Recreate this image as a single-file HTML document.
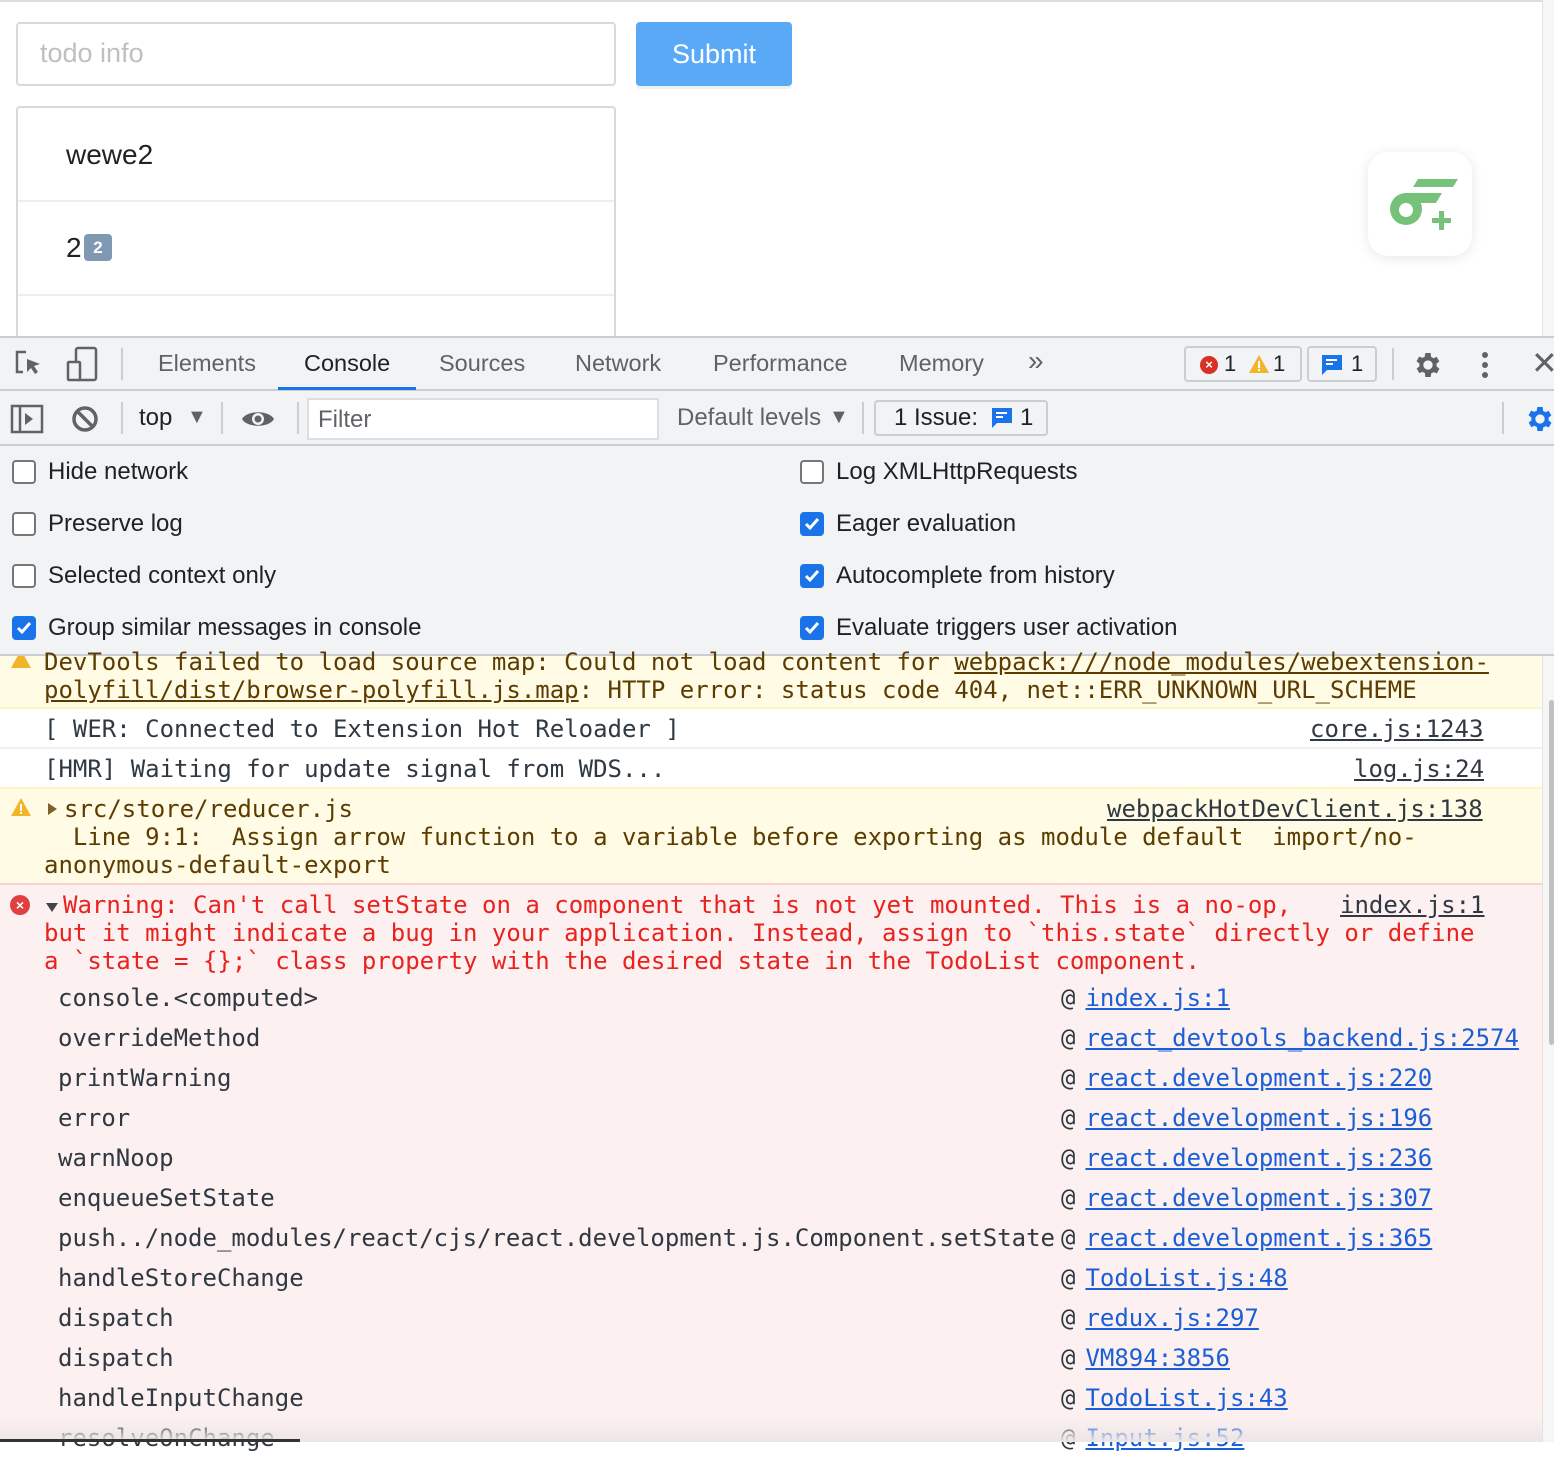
<!DOCTYPE html>
<html><head><meta charset="utf-8"><style>
*{box-sizing:border-box;margin:0;padding:0}
body{width:1554px;height:1442px;overflow:hidden;background:#fff;font-family:"Liberation Sans",Arial,sans-serif;position:relative}
.a{position:absolute}
.mono{font-family:"DejaVu Sans Mono","Liberation Mono",monospace;font-size:24px;white-space:pre}
.tab{position:absolute;top:350px;font-size:23.5px;color:#5f6368}
.cb{position:absolute;width:24px;height:24px;border:2px solid #767676;border-radius:4px;background:#fff}
.cb.on{background:#1a73e8;border-color:#1a73e8}
.cbl{position:absolute;font-size:24px;color:#202124}
a{color:#1a5fd6;text-decoration:underline}
.lnk{color:#555;text-decoration:underline}
</style></head><body>
<!-- page -->
<div class="a" style="left:0;top:0;width:1554px;height:2px;background:#dadce0"></div>
<div class="a" style="left:1542px;top:0;width:12px;height:336px;background:#f6f6f6;border-left:1px solid #e3e3e3"></div>
<div class="a" style="left:16px;top:22px;width:600px;height:64px;border:2px solid #d9d9d9;border-radius:4px"></div>
<div class="a" style="left:40px;top:38px;font-size:27px;color:#bfbfbf">todo info</div>
<div class="a" style="left:636px;top:22px;width:156px;height:64px;background:#5aa9f7;border-radius:4px;box-shadow:0 3px 0 #eef0f2;color:#fff;font-size:27px;text-align:center;line-height:64px">Submit</div>
<div class="a" style="left:16px;top:106px;width:600px;height:240px;border:2px solid #d9d9d9;border-radius:4px"></div>
<div class="a" style="left:18px;top:200px;width:596px;height:2px;background:#eee"></div>
<div class="a" style="left:18px;top:294px;width:596px;height:2px;background:#eee"></div>
<div class="a" style="left:66px;top:139px;font-size:28px;color:#222">wewe2</div>
<div class="a" style="left:66px;top:232px;font-size:28px;color:#222">2</div>
<div class="a" style="left:84px;top:234px;width:28px;height:27px;background:#7f99b3;border-radius:4px;color:#fff;font-size:17px;font-weight:bold;text-align:center;line-height:27px">2</div>
<div class="a" style="left:1368px;top:152px;width:104px;height:104px;background:#fff;border-radius:20px;box-shadow:0 2px 12px rgba(0,0,0,.1)"></div>
<svg class="a" style="left:1368px;top:152px" width="104" height="104" viewBox="0 0 104 104">
<polygon points="50,27 90,27 85,35 45,35" fill="#76c27a"/>
<circle cx="38" cy="57" r="16" fill="#76c27a"/>
<polygon points="38,41 74,41 68,51 38,51" fill="#76c27a"/>
<circle cx="38" cy="58" r="7" fill="#fff"/>
<rect x="64" y="66" width="19" height="5" fill="#76c27a"/><rect x="71" y="59" width="5" height="19" fill="#76c27a"/>
</svg>
<!-- devtools toolbar 1 -->
<div class="a" style="left:0;top:336px;width:1554px;height:110px;background:#f1f3f4;border-top:2px solid #cacdd1"></div>
<div class="a" style="left:0;top:389px;width:1554px;height:2px;background:#cacdd1"></div>
<div class="a" style="left:0;top:444px;width:1554px;height:2px;background:#cacdd1"></div>
<svg class="a" style="left:14px;top:348px" width="32" height="32"><path d="M12 4H3v20h6" stroke="#5f6368" stroke-width="2.5" fill="none"/><path d="M13 11l13 5-6 2 4 6-3 2-4-6-4 4z" fill="#5f6368"/></svg>
<svg class="a" style="left:66px;top:346px" width="32" height="36"><rect x="10" y="2" width="20" height="32" rx="2" stroke="#5f6368" stroke-width="2.5" fill="none"/><rect x="2" y="16" width="12" height="18" rx="1" stroke="#5f6368" stroke-width="2.5" fill="#f1f3f4"/></svg>
<div class="a" style="left:121px;top:348px;width:2px;height:32px;background:#cacdd1"></div>
<div class="tab" style="left:158px">Elements</div>
<div class="tab" style="left:304px;color:#202124">Console</div>
<div class="a" style="left:278px;top:387px;width:138px;height:3px;background:#1a73e8"></div>
<div class="tab" style="left:439px">Sources</div>
<div class="tab" style="left:575px">Network</div>
<div class="tab" style="left:713px">Performance</div>
<div class="tab" style="left:899px">Memory</div>
<div class="tab" style="left:1028px;font-size:28px;top:345px">»</div>
<div class="a" style="left:1184px;top:346px;width:118px;height:36px;border:2px solid #cacdd1;border-radius:4px"></div>
<div class="a" style="left:1200px;top:356px;width:18px;height:18px;border-radius:50%;background:#d93025;color:#fff;font-size:13px;text-align:center;line-height:18px;font-weight:bold">×</div>
<div class="a" style="left:1224px;top:351px;font-size:22px;color:#202124">1</div>
<svg class="a" style="left:1248px;top:354px" width="22" height="20"><path d="M11 1L21 19H1Z" fill="#f2b529"/><rect x="10" y="7" width="2" height="7" fill="#fff"/><rect x="10" y="15" width="2" height="2" fill="#fff"/></svg>
<div class="a" style="left:1273px;top:351px;font-size:22px;color:#202124">1</div>
<div class="a" style="left:1307px;top:346px;width:70px;height:36px;border:2px solid #cacdd1;border-radius:4px"></div>
<svg class="a" style="left:1320px;top:353px" width="24" height="24"><path d="M2 2h20v15H7l-5 5z" fill="#1a73e8"/><rect x="6" y="6" width="11" height="2" fill="#fff"/><rect x="6" y="10" width="7" height="2" fill="#fff"/></svg>
<div class="a" style="left:1351px;top:351px;font-size:22px;color:#202124">1</div>
<div class="a" style="left:1392px;top:348px;width:2px;height:32px;background:#cacdd1"></div>
<svg class="a" style="left:1412px;top:349px" width="32" height="32" viewBox="0 0 24 24"><path fill="#5f6368" d="M19.4 13a7.5 7.5 0 000-2l2.1-1.6-2-3.5-2.5 1a7 7 0 00-1.7-1L15 3h-4l-.4 2.7a7 7 0 00-1.7 1l-2.5-1-2 3.5L6.6 11a7.5 7.5 0 000 2l-2.1 1.6 2 3.5 2.5-1a7 7 0 001.7 1L11 21h4l.4-2.7a7 7 0 001.7-1l2.5 1 2-3.5zM13 15.5a3.5 3.5 0 110-7 3.5 3.5 0 010 7z" transform="translate(-1 0)"/></svg>
<div class="a" style="left:1482px;top:352px;width:6px;height:6px;border-radius:50%;background:#5f6368;box-shadow:0 10px 0 #5f6368,0 20px 0 #5f6368"></div>
<div class="a" style="left:1531px;top:344px;font-size:32px;color:#5f6368">✕</div>
<!-- toolbar 2 -->
<svg class="a" style="left:10px;top:404px" width="34" height="30"><rect x="2" y="2" width="30" height="26" stroke="#5f6368" stroke-width="2.5" fill="none"/><line x1="10" y1="2" x2="10" y2="28" stroke="#5f6368" stroke-width="2.5"/><path d="M15 9l8 6-8 6z" fill="#5f6368"/></svg>
<svg class="a" style="left:71px;top:405px" width="28" height="28"><circle cx="14" cy="14" r="11" stroke="#5f6368" stroke-width="3.5" fill="none"/><line x1="6" y1="6" x2="22" y2="22" stroke="#5f6368" stroke-width="3.5"/></svg>
<div class="a" style="left:121px;top:402px;width:2px;height:32px;background:#cacdd1"></div>
<div class="a" style="left:139px;top:404px;font-size:24px;color:#202124">top</div>
<div class="a" style="left:187px;top:406px;font-size:20px;color:#5f6368">▼</div>
<div class="a" style="left:221px;top:402px;width:2px;height:32px;background:#cacdd1"></div>
<svg class="a" style="left:241px;top:407px" width="34" height="24"><path d="M1 12C6 3 28 3 33 12C28 21 6 21 1 12Z" fill="#5f6368"/><circle cx="17" cy="12" r="6" fill="#f1f3f4"/><circle cx="17" cy="12" r="3.5" fill="#5f6368"/></svg>
<div class="a" style="left:297px;top:402px;width:2px;height:32px;background:#cacdd1"></div>
<div class="a" style="left:307px;top:398px;width:352px;height:42px;background:#fff;border:2px solid #dcdee1"></div>
<div class="a" style="left:318px;top:406px;font-size:24px;color:#5f6368">Filter</div>
<div class="a" style="left:677px;top:404px;font-size:24px;color:#5f6368">Default levels</div>
<div class="a" style="left:829px;top:406px;font-size:20px;color:#5f6368">▼</div>
<div class="a" style="left:862px;top:402px;width:2px;height:32px;background:#cacdd1"></div>
<div class="a" style="left:874px;top:400px;width:174px;height:36px;border:2px solid #cacdd1;border-radius:4px"></div>
<div class="a" style="left:894px;top:404px;font-size:24px;color:#202124">1 Issue:</div>
<svg class="a" style="left:990px;top:406px" width="24" height="24"><path d="M2 2h20v15H7l-5 5z" fill="#1a73e8"/><rect x="6" y="6" width="11" height="2" fill="#fff"/><rect x="6" y="10" width="7" height="2" fill="#fff"/></svg>
<div class="a" style="left:1020px;top:404px;font-size:24px;color:#202124">1</div>
<div class="a" style="left:1502px;top:402px;width:2px;height:32px;background:#cacdd1"></div>
<svg class="a" style="left:1524px;top:403px" width="32" height="32" viewBox="0 0 24 24"><path fill="#1a73e8" d="M19.4 13a7.5 7.5 0 000-2l2.1-1.6-2-3.5-2.5 1a7 7 0 00-1.7-1L15 3h-4l-.4 2.7a7 7 0 00-1.7 1l-2.5-1-2 3.5L6.6 11a7.5 7.5 0 000 2l-2.1 1.6 2 3.5 2.5-1a7 7 0 001.7 1L11 21h4l.4-2.7a7 7 0 001.7-1l2.5 1 2-3.5zM13 15.5a3.5 3.5 0 110-7 3.5 3.5 0 010 7z" transform="translate(-1 0)"/></svg>
<!-- settings -->
<div class="a" style="left:0;top:446px;width:1554px;height:209px;background:#f1f3f4"></div>
<div class="cb" style="left:12px;top:460px"></div><div class="cbl" style="left:48px;top:458px">Hide network</div>
<div class="cb" style="left:12px;top:512px"></div><div class="cbl" style="left:48px;top:510px">Preserve log</div>
<div class="cb" style="left:12px;top:564px"></div><div class="cbl" style="left:48px;top:562px">Selected context only</div>
<div class="cb on" style="left:12px;top:616px"><svg width="20" height="20" style="position:absolute;left:0;top:0"><path d="M4 10l4 4 8-9" stroke="#fff" stroke-width="3" fill="none"/></svg></div><div class="cbl" style="left:48px;top:614px">Group similar messages in console</div>
<div class="cb" style="left:800px;top:460px"></div><div class="cbl" style="left:836px;top:458px">Log XMLHttpRequests</div>
<div class="cb on" style="left:800px;top:512px"><svg width="20" height="20" style="position:absolute;left:0;top:0"><path d="M4 10l4 4 8-9" stroke="#fff" stroke-width="3" fill="none"/></svg></div><div class="cbl" style="left:836px;top:510px">Eager evaluation</div>
<div class="cb on" style="left:800px;top:564px"><svg width="20" height="20" style="position:absolute;left:0;top:0"><path d="M4 10l4 4 8-9" stroke="#fff" stroke-width="3" fill="none"/></svg></div><div class="cbl" style="left:836px;top:562px">Autocomplete from history</div>
<div class="cb on" style="left:800px;top:616px"><svg width="20" height="20" style="position:absolute;left:0;top:0"><path d="M4 10l4 4 8-9" stroke="#fff" stroke-width="3" fill="none"/></svg></div><div class="cbl" style="left:836px;top:614px">Evaluate triggers user activation</div>
<div class="a" style="left:0;top:654px;width:1554px;height:2px;background:#cacdd1"></div>
<!-- messages -->
<div class="a" style="left:0;top:656px;width:1542px;height:53px;background:#fffbe5;border-bottom:2px solid #fff5c2"></div>
<div class="a" style="left:0;top:709px;width:1542px;height:40px;background:#fff;border-bottom:2px solid #f0f0f0"></div>
<div class="a" style="left:0;top:749px;width:1542px;height:40px;background:#fff;border-bottom:2px solid #fff5c2"></div>
<div class="a" style="left:0;top:789px;width:1542px;height:96px;background:#fffbe5;border-bottom:2px solid #fad2d2"></div>
<div class="a" style="left:0;top:885px;width:1542px;height:557px;background:#fcf0f0"></div>
<div class="a" style="left:1542px;top:656px;width:12px;height:786px;background:#f6f6f6;border-left:1px solid #e3e3e3"></div>
<div class="a" style="left:1549px;top:700px;width:5px;height:345px;background:#c1c1c1;border-radius:3px"></div>
<svg class="a" style="left:10px;top:656px" width="22" height="14"><path d="M11 -6L21 12H1Z" fill="#f2b529"/></svg>
<div class="a mono" style="left:44px;top:648px;color:#5c3c00;line-height:28px">DevTools failed to load source map: Could not load content for <span class="lnk" style="color:#5c3c00">webpack:///node_modules/webextension-</span>
<span class="lnk" style="color:#5c3c00">polyfill/dist/browser-polyfill.js.map</span>: HTTP error: status code 404, net::ERR_UNKNOWN_URL_SCHEME</div>
<div class="a mono" style="left:44px;top:715px;color:#303942">[ WER: Connected to Extension Hot Reloader ]</div>
<div class="a mono" style="left:1310px;top:715px;color:#303942;text-decoration:underline">core.js:1243</div>
<div class="a mono" style="left:44px;top:755px;color:#303942">[HMR] Waiting for update signal from WDS...</div>
<div class="a mono" style="left:1354px;top:755px;color:#303942;text-decoration:underline">log.js:24</div>
<svg class="a" style="left:10px;top:797px" width="22" height="20"><path d="M11 1L21 19H1Z" fill="#f2b529"/><rect x="10" y="7" width="2" height="7" fill="#fff"/><rect x="10" y="15" width="2" height="2" fill="#fff"/></svg>
<div class="a" style="left:48px;top:803px;width:0;height:0;border-left:9px solid #5c3c00;border-top:6px solid transparent;border-bottom:6px solid transparent;opacity:.8"></div>
<div class="a mono" style="left:64px;top:795px;color:#5c3c00;line-height:28px">src/store/reducer.js</div>
<div class="a mono" style="left:44px;top:823px;color:#5c3c00;line-height:28px">  Line 9:1:  Assign arrow function to a variable before exporting as module default  import/no-
anonymous-default-export</div>
<div class="a mono" style="left:1107px;top:795px;color:#303942;text-decoration:underline">webpackHotDevClient.js:138</div>
<div class="a" style="left:10px;top:895px;width:20px;height:20px;border-radius:50%;background:#e04040;color:#fff;font-size:14px;font-weight:bold;text-align:center;line-height:20px">×</div>
<div class="a" style="left:46px;top:903px;width:0;height:0;border-top:9px solid #444;border-left:6px solid transparent;border-right:6px solid transparent"></div>
<div class="a mono" style="left:63px;top:891px;color:#e8221e;line-height:28px">Warning: Can't call setState on a component that is not yet mounted. This is a no-op,</div>
<div class="a mono" style="left:44px;top:919px;color:#e8221e;line-height:28px">but it might indicate a bug in your application. Instead, assign to `this.state` directly or define
a `state = {};` class property with the desired state in the TodoList component.</div>
<div class="a mono" style="left:1340px;top:891px;color:#303942;text-decoration:underline">index.js:1</div>
<div class="a mono" style="left:58px;top:978px;color:#303942;line-height:40px">console.&lt;computed&gt;
overrideMethod
printWarning
error
warnNoop
enqueueSetState
push../node_modules/react/cjs/react.development.js.Component.setState
handleStoreChange
dispatch
dispatch
handleInputChange
resolveOnChange</div>
<div class="a mono" style="left:1061px;top:978px;color:#303942;line-height:40px">@<a style="margin-left:10px">index.js:1</a>
@<a style="margin-left:10px">react_devtools_backend.js:2574</a>
@<a style="margin-left:10px">react.development.js:220</a>
@<a style="margin-left:10px">react.development.js:196</a>
@<a style="margin-left:10px">react.development.js:236</a>
@<a style="margin-left:10px">react.development.js:307</a>
@<a style="margin-left:10px">react.development.js:365</a>
@<a style="margin-left:10px">TodoList.js:48</a>
@<a style="margin-left:10px">redux.js:297</a>
@<a style="margin-left:10px">VM894:3856</a>
@<a style="margin-left:10px">TodoList.js:43</a>
@<a style="margin-left:10px">Input.js:52</a></div>
<div class="a" style="left:0;top:1418px;width:1542px;height:24px;background:linear-gradient(rgba(236,228,228,0),#ece6e6)"></div>
<div class="a" style="left:0;top:1439px;width:300px;height:3px;background:#333"></div>
</body></html>
